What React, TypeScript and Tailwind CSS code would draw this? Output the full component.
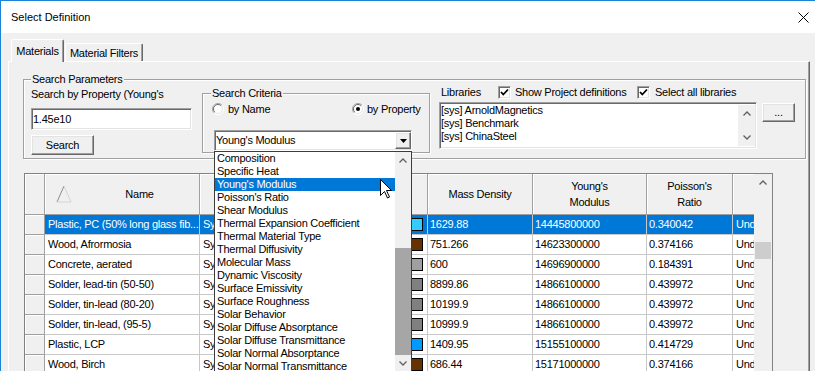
import React from "react";

const sunken =
  "border border-t-[#a0a0a0] border-l-[#a0a0a0] border-r-white border-b-white shadow-[inset_1px_1px_0_#696969,inset_-1px_-1px_0_#e3e3e3]";
const raised =
  "border border-t-white border-l-white border-r-[#696969] border-b-[#696969] shadow-[inset_-1px_-1px_0_#a0a0a0,inset_1px_1px_0_#e3e3e3]";
const etched = "border border-[#a0a0a0] shadow-[inset_1px_1px_0_#fff,1px_1px_0_#fff]";

function Chevron({ up }: { up?: boolean }) {
  return (
    <svg width="8" height="5" viewBox="0 0 8 5">
      <path
        d={up ? "M0.5,4.5 L4,1 L7.5,4.5" : "M0.5,0.5 L4,4 L7.5,0.5"}
        fill="none"
        stroke="#606060"
        strokeWidth="1.3"
      />
    </svg>
  );
}

function Radio({ checked }: { checked?: boolean }) {
  return (
    <svg width="12" height="12" viewBox="0 0 12 12" className="shrink-0">
      <circle cx="6" cy="6" r="5.5" fill="#fff" />
      <path d="M2.1,9.9 A5.5,5.5 0 0 1 9.9,2.1" stroke="#a0a0a0" fill="none" />
      <path d="M9.9,2.1 A5.5,5.5 0 0 1 2.1,9.9" stroke="#fff" fill="none" />
      <path d="M2.8,9.2 A4.5,4.5 0 0 1 9.2,2.8" stroke="#696969" fill="none" />
      <path d="M9.2,2.8 A4.5,4.5 0 0 1 2.8,9.2" stroke="#e3e3e3" fill="none" />
      {checked && <circle cx="6" cy="6" r="2" fill="#000" />}
    </svg>
  );
}

function Check() {
  return (
    <div className={`w-[13px] h-[13px] bg-white shrink-0 flex items-center justify-center ${sunken}`}>
      <svg width="9" height="9" viewBox="0 0 9 9">
        <polyline points="1,4 3.3,6.5 8,1.5" fill="none" stroke="#000" strokeWidth="1.8" />
      </svg>
    </div>
  );
}

const dropdownItems = [
  "Composition",
  "Specific Heat",
  "Young's Modulus",
  "Poisson's Ratio",
  "Shear Modulus",
  "Thermal Expansion Coefficient",
  "Thermal Material Type",
  "Thermal Diffusivity",
  "Molecular Mass",
  "Dynamic Viscosity",
  "Surface Emissivity",
  "Surface Roughness",
  "Solar Behavior",
  "Solar Diffuse Absorptance",
  "Solar Diffuse Transmittance",
  "Solar Normal Absorptance",
  "Solar Normal Transmittance",
];

const rows = [
  { name: "Plastic, PC (50% long glass fib...", color: "#33ccff", mass: "1629.88", ym: "14445800000", pr: "0.340042" },
  { name: "Wood, Afrormosia", color: "#663300", mass: "751.266", ym: "14623300000", pr: "0.374166" },
  { name: "Concrete, aerated", color: "#a0a0a0", mass: "600", ym: "14696900000", pr: "0.184391" },
  { name: "Solder, lead-tin (50-50)", color: "#808080", mass: "8899.86", ym: "14866100000", pr: "0.439972" },
  { name: "Solder, tin-lead (80-20)", color: "#808080", mass: "10199.9", ym: "14866100000", pr: "0.439972" },
  { name: "Solder, tin-lead, (95-5)", color: "#808080", mass: "10999.9", ym: "14866100000", pr: "0.439972" },
  { name: "Plastic, LCP", color: "#0099ff", mass: "1409.95", ym: "15155100000", pr: "0.414729" },
  { name: "Wood, Birch", color: "#663300", mass: "686.44", ym: "15171000000", pr: "0.374166" },
];

const headCell =
  "h-full shrink-0 bg-[#f0f0f0] border-r border-b border-r-[#a0a0a0] border-b-[#a0a0a0] shadow-[inset_1px_1px_0_#fff] flex items-center justify-center text-center leading-[16px]";

export default function App() {
  return (
    <div className="relative w-[815px] h-[371px] overflow-hidden bg-white border-t border-l border-[#1883d7] font-['Liberation_Sans',Arial,sans-serif] text-[11px] leading-[13px] tracking-[-0.25px] text-black flex flex-col">
      {/* Title bar */}
      <div className="h-[32px] shrink-0 bg-white flex items-center justify-between pl-[10px] pr-[6px]">
        <span className="tracking-normal">Select Definition</span>
        <svg width="11" height="11" viewBox="0 0 11 11">
          <path d="M0.5,0.5 L10.5,10.5 M10.5,0.5 L0.5,10.5" stroke="#000" strokeWidth="1" />
        </svg>
      </div>

      {/* Body */}
      <div className="flex-1 min-h-0 bg-[#f0f0f0] flex flex-col">
        {/* Tabs */}
        <div className="h-[28px] shrink-0 flex items-end pl-[10px]">
          <div className="relative z-10 -mb-px h-[23px] w-[53px] bg-[#f0f0f0] border-t border-l border-r border-t-white border-l-white border-r-[#696969] shadow-[inset_-1px_0_0_#a0a0a0] rounded-t-[2px] pt-[5px] text-center">
            Materials
          </div>
          <div className="ml-[1px] h-[18px] w-[78px] bg-[#f0f0f0] border-t border-l border-r border-t-white border-l-white border-r-[#696969] shadow-[inset_-1px_0_0_#a0a0a0] rounded-t-[2px] pt-[3px] text-center">
            Material Filters
          </div>
        </div>

        {/* Tab panel */}
        <div className="ml-[7px] w-[802px] flex-1 min-h-0 border-t border-l border-r border-t-white border-l-white border-r-[#696969] shadow-[inset_-1px_0_0_#a0a0a0] flex flex-col">
          {/* Search Parameters group */}
          <div className={`ml-[14px] mt-[17px] w-[783px] h-[80px] shrink-0 flex flex-col ${etched}`}>
            <div className="-mt-[7px] ml-[7px] px-[1px] w-fit h-[13px] bg-[#f0f0f0]">Search Parameters</div>
            <div className="flex items-start pl-[7px]">
              {/* Left column */}
              <div className="w-[161px] shrink-0 flex flex-col">
                <div className="mt-[2px] h-[13px] whitespace-nowrap">Search by Property (Young's</div>
                <div className={`mt-[7px] h-[22px] bg-white flex items-center pl-[1px] ${sunken}`}>1.45e10</div>
                <div className={`mt-[5px] h-[20px] w-[63px] bg-[#f0f0f0] flex items-center justify-center ${raised}`}>
                  Search
                </div>
              </div>

              {/* Search Criteria group */}
              <div className={`ml-[10px] mt-[7px] w-[228px] h-[60px] shrink-0 flex flex-col ${etched}`}>
                <div className="-mt-[7px] ml-[8px] px-[1px] w-fit h-[13px] bg-[#f0f0f0]">Search Criteria</div>
                <div className="mt-[2px] h-[14px] flex items-center pl-[9px]">
                  <Radio />
                  <span className="ml-[4px] w-[124px]">by Name</span>
                  <Radio checked />
                  <span className="ml-[3px]">by Property</span>
                </div>
                <div className={`relative ml-[11px] mt-[14px] w-[198px] h-[21px] shrink-0 bg-white flex items-center ${sunken}`}>
                  <span className="pl-[1px] flex-1">Young's Modulus</span>
                  <div className={`w-[16px] h-[17px] bg-[#f0f0f0] flex items-center justify-center ${raised}`}>
                    <svg width="7" height="4" viewBox="0 0 7 4">
                      <path d="M0,0 L7,0 L3.5,4 Z" fill="#000" />
                    </svg>
                  </div>

                  {/* Dropdown list (overlay) */}
                  <div className="absolute z-20 -left-px top-[20px] w-[198px] h-[222px] bg-white border border-[#3c3c3c] flex">
                    <div className="w-[180px] flex flex-col">
                      {dropdownItems.map((it) => (
                        <div
                          key={it}
                          className={`h-[13px] shrink-0 pl-[2px] whitespace-nowrap ${
                            it === "Young's Modulus" ? "bg-[#0078d7] text-white" : ""
                          }`}
                        >
                          {it}
                        </div>
                      ))}
                    </div>
                    <div className="w-[16px] bg-[#f0f0f0] flex flex-col">
                      <div className="h-[17px] shrink-0 flex items-center justify-center">
                        <Chevron up />
                      </div>
                      <div className="h-[79px] shrink-0" />
                      <div className="h-[107px] shrink-0 bg-[#a6a6a6]" />
                      <div className="h-[17px] shrink-0 flex items-center justify-center">
                        <Chevron />
                      </div>
                    </div>
                  </div>
                </div>
              </div>

              {/* Libraries */}
              <div className="ml-[9px] w-[318px] shrink-0 flex flex-col">
                <div className="h-[13px] flex items-center">
                  <span className="pl-[2px] w-[59px]">Libraries</span>
                  <Check />
                  <span className="ml-[4px] w-[122px] whitespace-nowrap">Show Project definitions</span>
                  <Check />
                  <span className="ml-[5px] whitespace-nowrap">Select all libraries</span>
                </div>
                <div className={`mt-[3px] h-[47px] bg-white flex ${sunken}`}>
                  <div className="flex-1 pt-[1px] pl-[1px] flex flex-col">
                    <div className="h-[13px]">[sys] ArnoldMagnetics</div>
                    <div className="h-[13px]">[sys] Benchmark</div>
                    <div className="h-[13px]">[sys] ChinaSteel</div>
                  </div>
                  <div className="w-[17px] my-[2px] mr-[1px] bg-[#f0f0f0] flex flex-col justify-between py-[6px] items-center">
                    <Chevron up />
                    <Chevron />
                  </div>
                </div>
              </div>

              <div className={`ml-[5px] mt-[17px] w-[33px] h-[19px] shrink-0 bg-[#f0f0f0] flex items-center justify-center ${raised}`}>
                ...
              </div>
            </div>
          </div>

          {/* Table */}
          <div className="ml-[15px] mt-[14px] w-[749px] flex-1 min-h-0 border-t border-l border-r border-[#828282] flex overflow-hidden">
            <div className="w-[729px] shrink-0 overflow-hidden flex flex-col">
              {/* Header */}
              <div className="h-[41px] shrink-0 flex w-max">
                <div className={`${headCell} w-[20px]`} />
                <div className={`${headCell} w-[155px] !justify-start`}>
                  <svg width="16" height="18" viewBox="0 0 16 18" className="ml-[11px] shrink-0">
                    <path d="M1,17 L8,1" stroke="#8c8c8c" fill="none" />
                    <path d="M8,1 L15,17 L1,17" stroke="#d4d4d4" fill="none" />
                  </svg>
                  <span className="flex-1 text-center pl-[8px]">Name</span>
                </div>
                <div className={`${headCell} w-[148px]`} />
                <div className={`${headCell} w-[80px]`} />
                <div className={`${headCell} w-[105px]`}>Mass Density</div>
                <div className={`${headCell} w-[114px]`}>
                  Young's
                  <br />
                  Modulus
                </div>
                <div className={`${headCell} w-[86px]`}>
                  Poisson's
                  <br />
                  Ratio
                </div>
                <div className={`${headCell} w-[22px]`} />
              </div>
              {/* Rows */}
              {rows.map((r, i) => {
                const sel = i === 0;
                const cell = `h-full shrink-0 border-r border-b border-[#c8c8c8] flex items-center pl-[2px] whitespace-nowrap overflow-hidden ${
                  sel ? "bg-[#0078d7] text-white" : "bg-white"
                }`;
                return (
                  <div key={i} className="h-[20px] shrink-0 flex w-max">
                    <div className="h-full w-[20px] shrink-0 bg-[#f0f0f0] border-r border-b border-[#a0a0a0] shadow-[inset_1px_1px_0_#fff]" />
                    <div className={`${cell} w-[155px] pl-[3px]`}>{r.name}</div>
                    <div className={`${cell} w-[148px] pl-[3px]`}>Sys</div>
                    <div className={`${cell} w-[80px] justify-end pr-[4px]`}>
                      <div className="w-[16px] h-[13px] border border-black" style={{ backgroundColor: r.color }} />
                    </div>
                    <div className={`${cell} w-[105px]`}>{r.mass}</div>
                    <div className={`${cell} w-[114px]`}>{r.ym}</div>
                    <div className={`${cell} w-[86px]`}>{r.pr}</div>
                    <div className={`${cell} w-[22px] pl-[3px]`}>Und</div>
                  </div>
                );
              })}
            </div>
            {/* Vertical scrollbar */}
            <div className="w-[18px] shrink-0 bg-[#f0f0f0] flex flex-col">
              <div className="h-[17px] shrink-0 flex items-center justify-center">
                <Chevron up />
              </div>
              <div className="h-[51px] shrink-0" />
              <div className="h-[17px] shrink-0 mx-[1px] bg-[#cdcdcd]" />
            </div>
          </div>
        </div>
      </div>

      {/* Mouse cursor */}
      <svg width="13" height="20" viewBox="0 0 13 20" className="absolute z-30 left-[379px] top-[178px]">
        <path d="M0.5,0.5 L0.5,16.5 L4.5,12.5 L7.5,19 L9.5,18 L6.5,11.5 L11.5,11.5 Z" fill="#fff" stroke="#000" />
      </svg>
    </div>
  );
}
